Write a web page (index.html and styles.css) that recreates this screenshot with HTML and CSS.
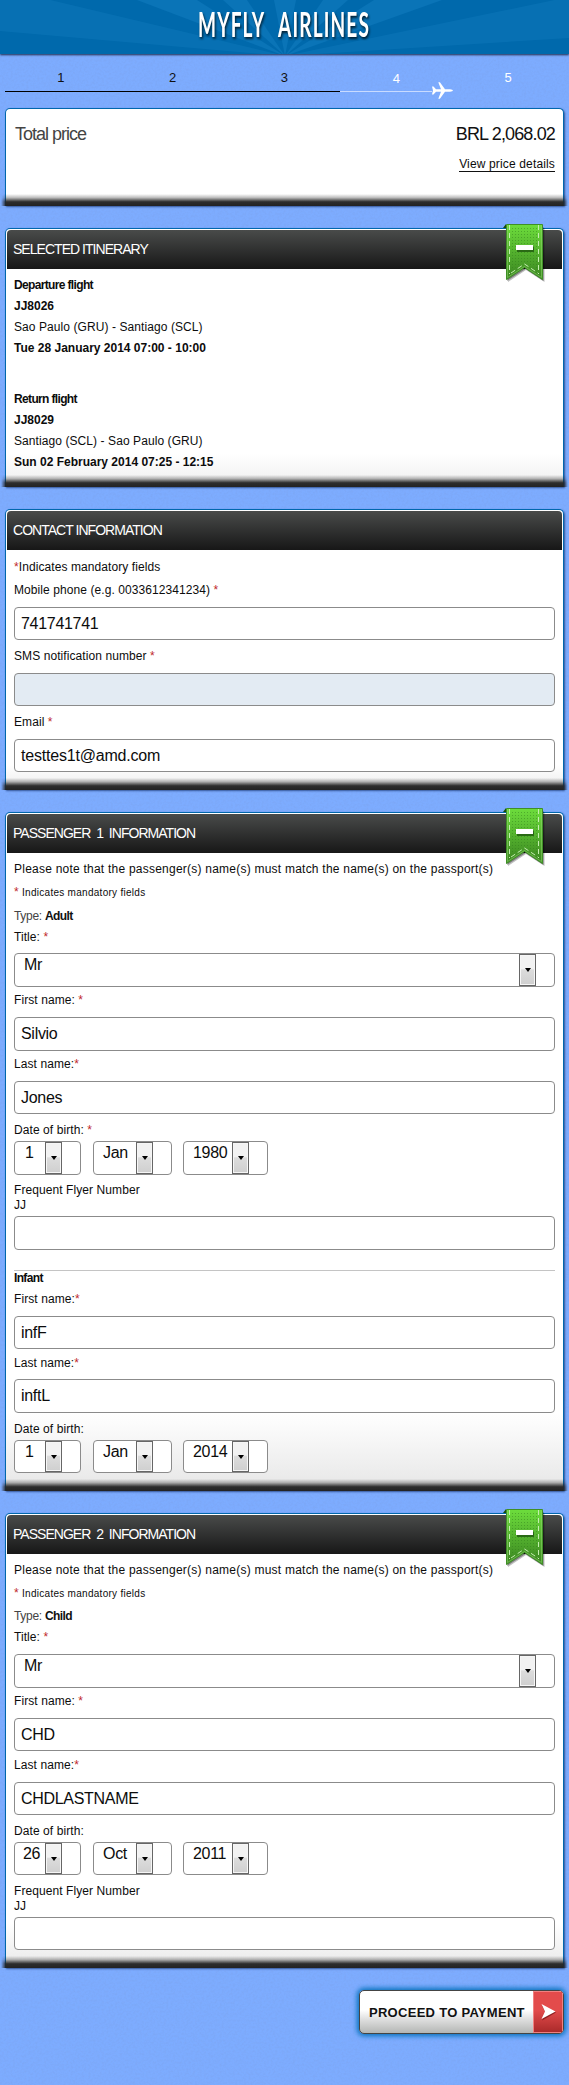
FILE: index.html
```html
<!DOCTYPE html>
<html lang="en">
<head>
<meta charset="utf-8">
<title>MyFly Airlines</title>
<link rel="stylesheet" href="styles.css">
</head>
<body>
<svg class="noise" width="569" height="2085" aria-hidden="true"><filter id="grain"><feTurbulence type="fractalNoise" baseFrequency="0.45" numOctaves="2"/><feColorMatrix values="0 0 0 0 0.2  0 0 0 0 0.35  0 0 0 0 0.8  1.6 0 0 0 -0.6"/></filter><rect width="569" height="2085" filter="url(#grain)"/></svg>
<svg width="0" height="0" class="defs" aria-hidden="true">
  <defs>
    <linearGradient id="green" x1="0" y1="0" x2="0" y2="1"><stop offset="0" stop-color="#6ddd3c"/><stop offset="1" stop-color="#3a8420"/></linearGradient>
    <pattern id="dots" width="3" height="3" patternUnits="userSpaceOnUse"><rect x="1" y="1" width="1" height="1" fill="#2c7a18" opacity=".45"/></pattern>
    <symbol id="ribbon" viewBox="0 0 44 62">
      <path d="M1 4 4 0v4z" fill="#174a0a"/>
      <path d="M6 4h36.500v54L24 46 6 58z" fill="#000" opacity=".25"/>
      <path d="M5 3h36.500v54L23.500 45 5 57z" fill="#000" opacity=".35"/>
      <path d="M4.500.500h36v55L22.500 43.500 4.500 55.500z" fill="url(#green)" stroke="#3f8f26"/>
      <path d="M8 3h29v43L22.500 38 8 47z" fill="url(#dots)"/>
      <path d="M5.500 1.500v52L22.500 42.500l17 11v-52" fill="none" stroke="#8fd66f" stroke-width="1" opacity=".55"/>
      <path d="M7.500 1v49M36.500 1v49M9 49l13.500-9L36 49" fill="none" stroke="#c4eeb0" stroke-width="1" stroke-dasharray="5 3"/>
      <path d="M15 23h17v5H15z" fill="#174a0a" opacity=".7"/>
      <path d="M14 21h17v5H14z" fill="#fff"/>
    </symbol>
  </defs>
</svg>

<header class="banner">
  <svg width="569" height="54" viewBox="0 0 569 54">
    <g fill="#0a74b7">
      <path d="M285 56 0 31V-12z" opacity=".65"/><path d="M285 56 137 0h60z"/><path d="M285 56 223 0h24z"/><path d="M285 56 274 0h22z"/><path d="M285 56 323 0h25z"/><path d="M285 56 374 0h68z"/><path d="M285 56 569-3v41z" opacity=".65"/>
    </g>
    <text class="brand" x="198" y="37" textLength="172" lengthAdjust="spacingAndGlyphs">MYFLY AIRLINES</text>
  </svg>
</header>

<ol class="steps">
  <li class="done">1</li><li class="done">2</li><li class="done">3</li>
  <li class="now">4<svg class="plane" width="21" height="17" viewBox="0 0 21 17"><path fill="#fff" d="M0 4.500h1.500L4 7.300h5L6.300.300h1.600L13 7.300h5q3 .500 3 1.200t-3 1.200h-5L7.900 16.700H6.300L9 9.700H4L1.500 12.500H0L1 8.500z"/></svg></li>
  <li>5</li>
</ol>

<section class="panel price">
  <div class="total"><span class="lbl">Total price</span><span>BRL 2,068.02</span></div>
  <a class="details">View price details</a>
</section>

<section class="panel itinerary">
  <h2 class="head">SELECTED ITINERARY</h2>
  <svg class="ribbon" width="44" height="62"><use href="#ribbon"/></svg>
  <div class="body">
    <div class="flight">
      <p class="line tight">Departure flight</p><p class="line strong">JJ8026</p><p class="line">Sao Paulo (GRU) - Santiago (SCL)</p><p class="line strong">Tue 28 January 2014 07:00 - 10:00</p>
    </div>
    <div class="flight">
      <p class="line tight">Return flight</p><p class="line strong">JJ8029</p><p class="line">Santiago (SCL) - Sao Paulo (GRU)</p><p class="line strong">Sun 02 February 2014 07:25 - 12:15</p>
    </div>
  </div>
</section>

<section class="panel contact">
  <h2 class="head">CONTACT INFORMATION</h2>
  <div class="body">
    <p class="line"><i>*</i>Indicates mandatory fields</p>
    <p class="line t3">Mobile phone (e.g. 0033612341234) <i>*</i></p>
    <div class="input t7">741741741</div>
    <p class="line t6">SMS notification number <i>*</i></p>
    <div class="input t7 off"></div>
    <p class="line t6">Email <i>*</i></p>
    <div class="input t7 email">testtes1t@amd.com</div>
  </div>
</section>

<section class="panel pax1">
  <h2 class="head">PASSENGER&nbsp; 1 &nbsp;INFORMATION</h2>
  <svg class="ribbon" width="44" height="62"><use href="#ribbon"/></svg>
  <div class="body">
    <p class="line note">Please note that the passenger(s) name(s) must match the name(s) on the passport(s)</p>
    <p class="line small t3"><i>*</i> Indicates mandatory fields</p>
    <p class="line t4 type">Type: <b>Adult</b></p>
    <p class="line t1">Title: <i>*</i></p>
    <div class="select tall t6 title"><span>Mr</span><button></button></div>
    <p class="line t3">First name: <i>*</i></p>
    <div class="input tall t7">Silvio</div>
    <p class="line t3">Last name:<i>*</i></p>
    <div class="input t7">Jones</div>
    <p class="line t6">Date of birth: <i>*</i></p>
    <div class="dates t1"><div class="select tall day one"><span>1</span><button></button></div><div class="select tall month"><span>Jan</span><button></button></div><div class="select tall year"><span>1980</span><button></button></div></div>
    <p class="line t5">Frequent Flyer Number</p>
    <p class="line jj">JJ</p>
    <div class="input tall t1"></div>
    <hr>
    <p class="line tight infant">Infant</p>
    <p class="line t1">First name:<i>*</i></p>
    <div class="input t7">infF</div>
    <p class="line t4">Last name:<i>*</i></p>
    <div class="input tall t6">inftL</div>
    <p class="line t6">Date of birth:</p>
    <div class="dates t1"><div class="select day one"><span>1</span><button></button></div><div class="select month"><span>Jan</span><button></button></div><div class="select year"><span>2014</span><button></button></div></div>
  </div>
</section>

<section class="panel pax2">
  <h2 class="head">PASSENGER&nbsp; 2 &nbsp;INFORMATION</h2>
  <svg class="ribbon" width="44" height="62"><use href="#ribbon"/></svg>
  <div class="body">
    <p class="line note">Please note that the passenger(s) name(s) must match the name(s) on the passport(s)</p>
    <p class="line small t3"><i>*</i> Indicates mandatory fields</p>
    <p class="line t3 type">Type: <b>Child</b></p>
    <p class="line t1">Title: <i>*</i></p>
    <div class="select tall t7 title"><span>Mr</span><button></button></div>
    <p class="line t3">First name: <i>*</i></p>
    <div class="input t7">CHD</div>
    <p class="line t4">Last name:<i>*</i></p>
    <div class="input t7">CHDLASTNAME</div>
    <p class="line t6">Date of birth:</p>
    <div class="dates t1"><div class="select day"><span>26</span><button></button></div><div class="select month"><span>Oct</span><button></button></div><div class="select year"><span>2011</span><button></button></div></div>
    <p class="line t6">Frequent Flyer Number</p>
    <p class="line jj">JJ</p>
    <div class="input t1"></div>
  </div>
</section>

<div class="actions">
  <div class="pay"><span>PROCEED TO PAYMENT</span><em><svg width="15" height="18" viewBox="0 0 15 18"><path d="M1 2.500 15 9.500 1 17.500 4.500 9.500z" fill="#8e2222"/><path d="M.500 1 14.500 8.500.500 16 4 8.500z" fill="#fff"/></svg></em></div>
</div>
</body>
</html>
```
FILE: styles.css
```css
* { box-sizing: border-box; }
html { background: #7dacff; }
body { margin: 0; width: 569px; height: 2085px; overflow: hidden; position: relative; font: 12px "Liberation Sans", Arial, sans-serif; letter-spacing: .08px; color: #0c0c0c; }
p, h2, ol { margin: 0; padding: 0; }
i { font-style: normal; color: #c0292b; }
.noise { position: absolute; left: 0; top: 0; z-index: -1; opacity: .45; }
.defs { position: absolute; }

.banner { height: 54px; background: #0069ac; box-shadow: 0 1px 2px #1d2b4d; }
.banner svg { display: block; }
.brand { font: 700 34px Lato, sans-serif; letter-spacing: 2px; word-spacing: 15px; fill: #fff; filter: drop-shadow(1px 2px 1px rgba(0, 0, 0, .7)); }

.steps { display: grid; grid-template-columns: repeat(5, 1fr); width: 559px; height: 38px; margin: 0 5px; list-style: none; font-size: 13px; text-align: center; color: #fff; }
.steps li { padding-top: 16px; line-height: 15px; border-bottom: 1px solid transparent; position: relative; }
.steps .done { color: #111; border-color: #000; }
.steps .now { padding-top: 17px; }
.steps .now::after { content: ""; position: absolute; left: 0; right: 20px; bottom: -1px; height: 1px; background: #c8dbff; }
.plane { position: absolute; right: -1px; bottom: -8px; z-index: 1; }

.panel { position: relative; width: 559px; margin-left: 5px; border: 1px solid #0067ad; border-bottom: 0; border-radius: 5px 5px 0 0; background: #fff; padding: 1px 1px 0; box-shadow: 1px 1px 2px rgba(20, 50, 110, .7); }
.panel::after { content: ""; position: absolute; left: -5px; right: -5px; bottom: 0; height: 12px; background: linear-gradient(rgba(34, 34, 34, 0), rgba(34, 34, 34, .3) 30%, rgba(34, 34, 34, .95) 65%, #222); -webkit-mask: linear-gradient(90deg, transparent, #000 5px, #000 calc(100% - 5px), transparent); mask: linear-gradient(90deg, transparent, #000 5px, #000 calc(100% - 5px), transparent); }
.price { height: 98px; margin-top: 16px; padding: 14px 8px 0 9px; }
.total { display: flex; justify-content: space-between; font-size: 18px; line-height: 22px; letter-spacing: -.85px; color: #111; }
.total .lbl { color: #444; letter-spacing: -1px; }
.details { display: block; width: max-content; margin: 11px 0 0 auto; line-height: 16px; border-bottom: 1px solid #111; height: 16px; letter-spacing: .15px; }
.itinerary { height: 259px; margin-top: 22px; background: linear-gradient(#fff 225px, #eee); }
.contact { height: 281px; margin-top: 22px; background: linear-gradient(#fff 255px, #eaeaea); }
.pax1 { height: 679px; margin-top: 22px; background: linear-gradient(#fff 600px, #e6e6e6); }
.pax2 { height: 455px; margin-top: 22px; background: linear-gradient(#fff 410px, #e8e8e8); }

.head { height: 39px; border-radius: 4px 4px 0 0; background: linear-gradient(#494b4a, #171717); color: #fff; font-size: 14px; font-weight: 400; line-height: 39px; padding-left: 6px; letter-spacing: -.97px; }
.ribbon { position: absolute; right: 17px; top: -5px; z-index: 2; }
.body { padding: 6px 7px 0; }
.contact .body { padding-top: 7px; }
.line { height: 20px; line-height: 20px; white-space: pre; }
.note { letter-spacing: .23px; }
.flight { display: grid; row-gap: 1px; }
.flight + .flight { margin-top: 31px; }
.tight { font-weight: 700; letter-spacing: -.65px; }
.strong { font-weight: 700; letter-spacing: 0; }
.small { font-size: 10px; letter-spacing: .28px; }
.small i { font-size: 12px; }
.type { color: #444; letter-spacing: -.3px; }
.type b { color: #111; letter-spacing: -.6px; }
.jj { margin-top: -5px; }
.infant { margin-top: -3px; }
hr { border: 0; height: 1px; background: #c4c4c4; margin: 20px 0 0; }

.input, .select { border: 1px solid #8b8b8b; border-radius: 4px; background: #fff; height: 33px; font-size: 16px; letter-spacing: -.3px; }
.email { letter-spacing: -.2px; }
.tall { height: 34px; }
.input { line-height: 31px; padding-left: 6px; }
.input.off { background: #e3ebf3; }
.select { display: flex; }
.select span { flex: none; line-height: 21px; padding-left: 9px; }
.select button { height: 100%; width: 17px; margin: 0; padding: 0; border: 1px solid #666; box-shadow: inset 0 0 0 1px #f6f6f6; background: linear-gradient(#f2f2f2 45%, #dcdcdc 50%, #cfcfcf); display: flex; align-items: center; justify-content: center; }
.select button::after { content: ""; border: 3.500px solid transparent; border-top: 4px solid #000; border-bottom: 0; margin-top: 0; }
.title span { width: 504px; }
.dates { display: flex; }
.day { width: 67px; margin-right: 12px; }
.day span { width: 30px; padding-left: 8px; }
.one span { padding-left: 10px; }
.month { width: 79px; margin-right: 11px; }
.month span { width: 42px; }
.year { width: 85px; }
.year span { width: 48px; }
.t1 { margin-top: 1px; }
.t3 { margin-top: 3px; }
.t4 { margin-top: 4px; }
.t5 { margin-top: 5px; }
.t6 { margin-top: 6px; }
.t7 { margin-top: 7px; }

.actions { display: flex; justify-content: flex-end; padding: 22px 5px 0 0; }
.pay { display: flex; width: 205px; height: 44px; border: 1px solid #444; border-radius: 5px; overflow: hidden; background: linear-gradient(#fff 45%, #e2e2e2 65%, #b4b6b4); box-shadow: 0 0 5px 2px #0672bd; font-size: 13px; font-weight: 700; letter-spacing: .28px; line-height: 44px; color: #111; }
.pay span { width: 173px; padding-left: 9px; white-space: nowrap; }
.pay em { flex: 1; display: flex; align-items: center; justify-content: center; border: 1px solid #f08080; background: linear-gradient(#e34b4b 45%, #ab2a2a); }
```
